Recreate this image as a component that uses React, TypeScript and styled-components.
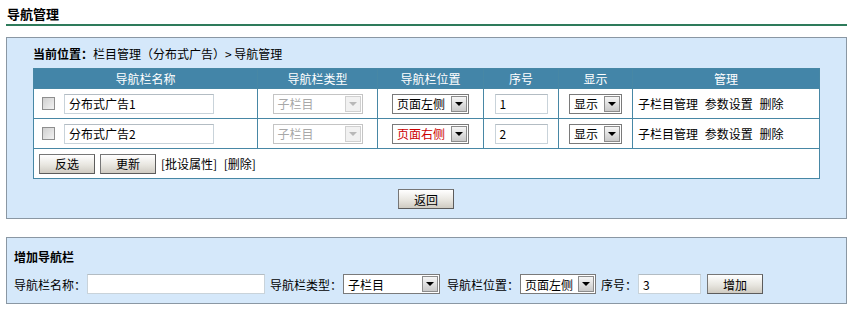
import styled, { createGlobalStyle } from "styled-components";

const GlobalStyle = createGlobalStyle`
  body {
    margin: 0;
    background: #ffffff;
    font-family: "Noto Sans CJK SC", "Noto Sans", sans-serif;
    font-size: 12px;
    color: #000000;
  }
`;

const Page = styled.div`
  padding: 0 10px 0 6px;
`;

const PageTitle = styled.div`
  padding: 4px 0 0 1px;
  line-height: 20px;
  font-size: 13px;
  font-weight: bold;
  border-bottom: 2px solid #2e7b5b;
  margin-bottom: 11px;
`;

const Panel = styled.div<{ $pad: string; $mt?: number }>`
  border: 1px solid #8a97a3;
  background: #d5e8fa;
  padding: ${(p) => p.$pad};
  margin-top: ${(p) => p.$mt || 0}px;
`;

const Breadcrumb = styled.div`
  line-height: 16px;
  margin-bottom: 6px;

  > b {
    font-weight: bold;
  }
`;

const Table = styled.table`
  width: 786px;
  table-layout: fixed;
  border-collapse: collapse;
  background: #ffffff;
`;

const Col = styled.col<{ $w: number }>`
  width: ${(p) => p.$w}px;
`;

const Th = styled.th`
  height: 19px;
  padding: 0;
  line-height: 19px;
  background: #4385a8;
  border: 1px solid #4787a5;
  color: #ffffff;
  font-weight: normal;
  text-align: center;
`;

const Td = styled.td`
  height: 29px;
  padding: 0;
  border: 1px solid #4787a5;
`;

const Cell = styled.div<{ $align?: string; $pl?: number }>`
  display: flex;
  align-items: center;
  justify-content: ${(p) => p.$align || "center"};
  padding-left: ${(p) => p.$pl || 0}px;
  gap: 5px;
`;

const Links = styled.span`
  word-spacing: 4px;
`;

const CheckBox = styled.span`
  display: inline-block;
  width: 11px;
  height: 11px;
  margin-right: 4px;
  border: 1px solid #8e8e8e;
  background: linear-gradient(135deg, #cfcfcf, #f2f2f2);
`;

const TextInput = styled.span<{ $w: number }>`
  display: inline-flex;
  align-items: center;
  box-sizing: border-box;
  width: ${(p) => p.$w}px;
  height: 20px;
  padding-left: 4px;
  border: 1px solid #c9d3da;
  border-top-color: #b3bcc3;
  background: #ffffff;
`;

const SelectBox = styled.span<{ $w: number; $disabled?: boolean; $red?: boolean }>`
  display: inline-flex;
  align-items: center;
  justify-content: space-between;
  box-sizing: border-box;
  width: ${(p) => p.$w}px;
  height: 20px;
  padding-left: 4px;
  border: 1px solid ${(p) => (p.$disabled ? "#c4c4c4" : "#7a7a7a")};
  background: #ffffff;
  color: ${(p) => (p.$disabled ? "#a8a8a8" : p.$red ? "#cc0000" : "#000000")};
`;

const SelectArrow = styled.span<{ $disabled?: boolean }>`
  display: inline-flex;
  align-items: center;
  justify-content: center;
  box-sizing: border-box;
  width: 16px;
  height: 16px;
  margin-right: 1px;
  border: 1px solid ${(p) => (p.$disabled ? "#d0d0d0" : "#8c8c8c")};
  background: ${(p) =>
    p.$disabled ? "#f1f1f1" : "linear-gradient(#f6f6f6, #c9c9c9)"};

  &::after {
    content: "";
    border-left: 4px solid transparent;
    border-right: 4px solid transparent;
    border-top: 4px solid ${(p) => (p.$disabled ? "#b8b8b8" : "#000000")};
  }
`;

const Button = styled.button<{ $ml?: number }>`
  box-sizing: border-box;
  width: 56px;
  height: 20px;
  padding: 0;
  margin-left: ${(p) => p.$ml || 0}px;
  border: 1px solid #767676;
  border-right-color: #5c5c5c;
  border-bottom-color: #5c5c5c;
  background: linear-gradient(#ffffff, #e8e6e0 55%, #cfcbc2);
  font-family: "Noto Sans CJK SC", sans-serif;
  font-size: 12px;
  color: #000000;
`;

const Actions = styled.div`
  display: flex;
  justify-content: center;
  margin-top: 10px;
`;

const SectionTitle = styled.div`
  line-height: 18px;
  font-weight: bold;
  margin-bottom: 8px;
`;

const FormRow = styled.div`
  display: flex;
  align-items: center;
  height: 20px;
`;

const Label = styled.span<{ $ml?: number }>`
  margin-left: ${(p) => p.$ml || 0}px;
  margin-right: 1px;
  white-space: nowrap;
`;

type SelectProps = { w: number; value: string; disabled?: boolean; red?: boolean };

function Select({ w, value, disabled, red }: SelectProps) {
  return (
    <SelectBox $w={w} $disabled={disabled} $red={red}>
      {value}
      <SelectArrow $disabled={disabled} />
    </SelectBox>
  );
}

const rows = [
  { name: "分布式广告1", pos: "页面左侧", order: "1", red: false },
  { name: "分布式广告2", pos: "页面右侧", order: "2", red: true },
];

const heads = ["导航栏名称", "导航栏类型", "导航栏位置", "序号", "显示", "管理"];
const widths = [224, 120, 106, 75, 74, 187];

export default function App() {
  return (
    <Page>
      <GlobalStyle />
      <PageTitle>导航管理</PageTitle>
      <Panel $pad="8px 27px 9px 26px">
        <Breadcrumb>
          <b>当前位置：</b>栏目管理（分布式广告）&gt; 导航管理
        </Breadcrumb>
        <Table>
          <colgroup>
            {widths.map((w, i) => (
              <Col key={i} $w={w} />
            ))}
          </colgroup>
          <thead>
            <tr>
              {heads.map((h) => (
                <Th key={h}>{h}</Th>
              ))}
            </tr>
          </thead>
          <tbody>
            {rows.map((r) => (
              <tr key={r.name}>
                <Td>
                  <Cell $align="flex-start" $pl={8}>
                    <CheckBox />
                    <TextInput $w={150}>{r.name}</TextInput>
                  </Cell>
                </Td>
                <Td>
                  <Cell>
                    <Select w={90} value="子栏目" disabled />
                  </Cell>
                </Td>
                <Td>
                  <Cell>
                    <Select w={77} value={r.pos} red={r.red} />
                  </Cell>
                </Td>
                <Td>
                  <Cell>
                    <TextInput $w={53}>{r.order}</TextInput>
                  </Cell>
                </Td>
                <Td>
                  <Cell>
                    <Select w={53} value="显示" />
                  </Cell>
                </Td>
                <Td>
                  <Cell $align="flex-start" $pl={5}>
                    <Links>子栏目管理 参数设置 删除</Links>
                  </Cell>
                </Td>
              </tr>
            ))}
            <tr>
              <Td colSpan={6}>
                <Cell $align="flex-start" $pl={5}>
                  <Button>反选</Button>
                  <Button>更新</Button>
                  <Links>[批设属性] [删除]</Links>
                </Cell>
              </Td>
            </tr>
          </tbody>
        </Table>
        <Actions>
          <Button>返回</Button>
        </Actions>
      </Panel>
      <Panel $pad="10px 7px 9px 7px" $mt={18}>
        <SectionTitle>增加导航栏</SectionTitle>
        <FormRow>
          <Label>导航栏名称：</Label>
          <TextInput $w={178} />
          <Label $ml={5}>导航栏类型：</Label>
          <Select w={97} value="子栏目" />
          <Label $ml={7}>导航栏位置：</Label>
          <Select w={76} value="页面左侧" />
          <Label $ml={5}>序号：</Label>
          <TextInput $w={63}>3</TextInput>
          <Button $ml={6}>增加</Button>
        </FormRow>
      </Panel>
    </Page>
  );
}
